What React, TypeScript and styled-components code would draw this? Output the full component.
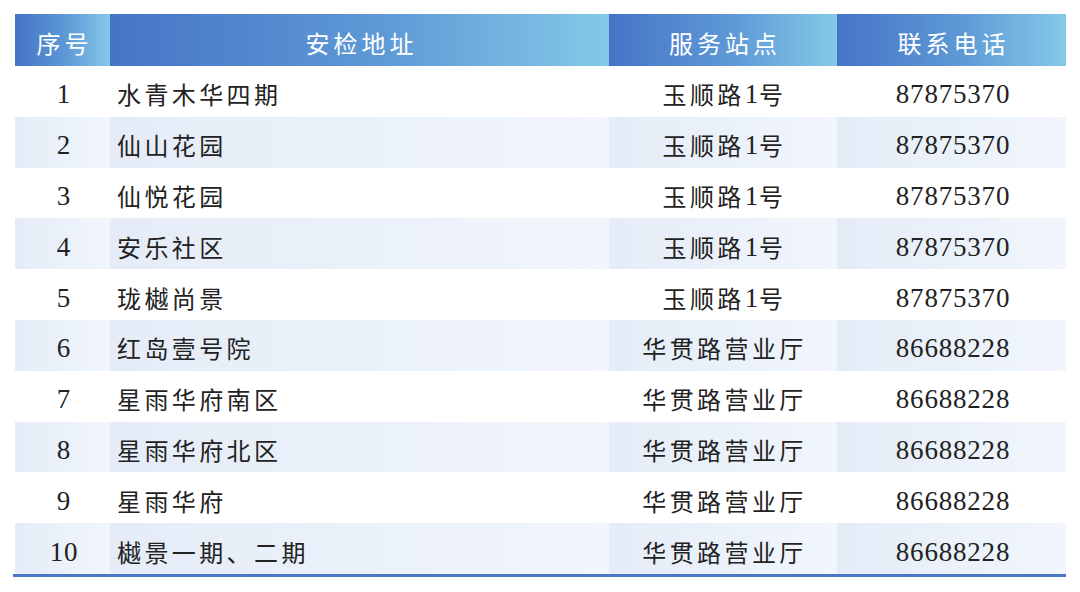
import styled, { createGlobalStyle } from "styled-components";

const GlobalStyle = createGlobalStyle`
  html, body {
    margin: 0;
    padding: 0;
    background: #ffffff;
  }
`;

const Page = styled.div`
  padding: 14px 14px 0 15px;
  font-family: "Liberation Serif", "Noto Sans CJK SC", serif;
`;

const Table = styled.div`
  display: grid;
  grid-template-columns: 95px 499px 228px 229px;
  width: 1051px;
  border-bottom: solid 3px #4a78c8;
  margin-left: -2px;
  padding-left: 2px;
`;

const HeadCell = styled.div`
  height: 52px;
  box-sizing: border-box;
  padding-top: 4px;
  display: flex;
  align-items: center;
  justify-content: center;
  background: linear-gradient(90deg, #4674c6 0%, #5e9ad6 55%, #84c9e8 100%);
  color: #ffffff;
  font-size: 24px;
  letter-spacing: 4px;
  padding-left: 4px;
`;

const Cell = styled.div<{ $striped: boolean; $left?: boolean }>`
  height: 50.8px;
  box-sizing: border-box;
  padding-top: 7px;
  display: flex;
  align-items: center;
  justify-content: ${(p) => (p.$left ? "flex-start" : "center")};
  padding-left: ${(p) => (p.$left ? "7px" : "3px")};
  background: ${(p) =>
    p.$striped ? "linear-gradient(90deg, #e5ecf7 0%, #f1f6fc 100%)" : "#ffffff"};
  color: #222222;
  font-size: 24px;
  letter-spacing: 3.4px;
  white-space: pre;
`;

const Num = styled.span`
  font-size: 27px;
  letter-spacing: 0.8px;
`;

const Han = styled.span`
  position: relative;
  top: -1px;
`;

const renderText = (text: string) =>
  text.split(/(\d+)/).filter(Boolean).map((part, i) =>
    /\d/.test(part) ? <Num key={i}>{part}</Num> : <Han key={i}>{part}</Han>
  );

const rows = [
  ["1", "水青木华四期", "玉顺路1号", "87875370"],
  ["2", "仙山花园", "玉顺路1号", "87875370"],
  ["3", "仙悦花园", "玉顺路1号", "87875370"],
  ["4", "安乐社区", "玉顺路1号", "87875370"],
  ["5", "珑樾尚景", "玉顺路1号", "87875370"],
  ["6", "红岛壹号院", "华贯路营业厅", "86688228"],
  ["7", "星雨华府南区", "华贯路营业厅", "86688228"],
  ["8", "星雨华府北区", "华贯路营业厅", "86688228"],
  ["9", "星雨华府", "华贯路营业厅", "86688228"],
  ["10", "樾景一期、二期", "华贯路营业厅", "86688228"],
];

const App = () => {
  return (
    <>
      <GlobalStyle />
      <Page>
        <Table>
          <HeadCell>序号</HeadCell>
          <HeadCell>安检地址</HeadCell>
          <HeadCell>服务站点</HeadCell>
          <HeadCell>联系电话</HeadCell>
          {rows.map((r, i) => {
            const striped = i % 2 === 1;
            return [
              <Cell key={i + "a"} $striped={striped}>{renderText(r[0])}</Cell>,
              <Cell key={i + "b"} $striped={striped} $left>{renderText(r[1])}</Cell>,
              <Cell key={i + "c"} $striped={striped}>{renderText(r[2])}</Cell>,
              <Cell key={i + "d"} $striped={striped}>{renderText(r[3])}</Cell>,
            ];
          })}
        </Table>
      </Page>
    </>
  );
};

export default App;
